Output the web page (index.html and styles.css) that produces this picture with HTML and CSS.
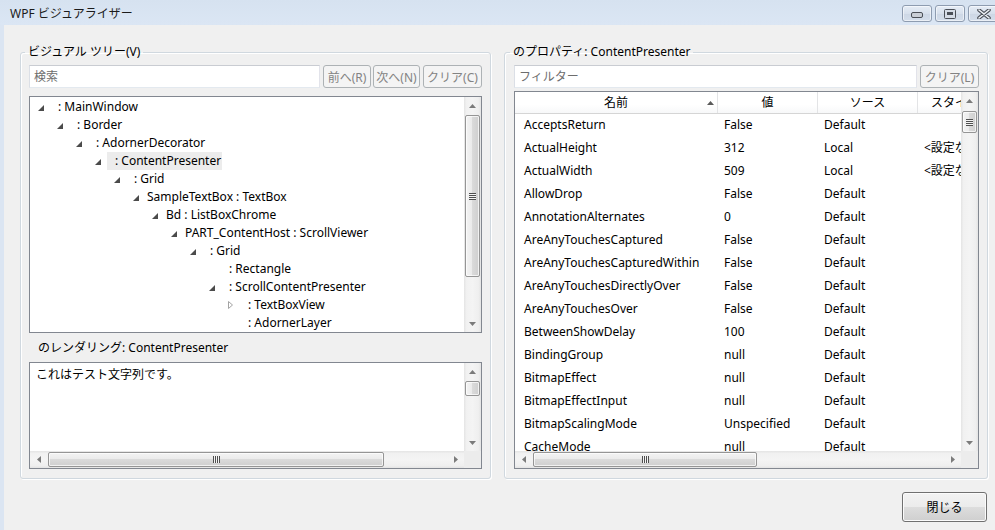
FILE: index.html
```html
<!DOCTYPE html>
<html lang="ja">
<head>
<meta charset="utf-8">
<title>WPF ビジュアライザー</title>
<link rel="stylesheet" href="styles.css">
</head>
<body>
<div class="window">
  <div class="titlebar">
    <div class="title">WPF ビジュアライザー</div>
    <div class="caption-buttons">
      <div class="cap-btn">
        <svg width="12" height="6" viewBox="0 0 12 6"><rect x="0.5" y="0.5" width="11" height="5" rx="1.5" fill="#c9ced6" stroke="#4a4f57"/></svg>
      </div>
      <div class="cap-btn">
        <svg width="12" height="10" viewBox="0 0 12 10"><rect x="0.5" y="0.5" width="11" height="9" rx="1" fill="#d5dce6" stroke="#4a4f57"/><rect x="3" y="3" width="6" height="3" fill="#4a4f57"/></svg>
      </div>
      <div class="cap-btn close">
        <svg width="14" height="10" viewBox="0 0 14 10"><path d="M2 1 L12 9 M12 1 L2 9" stroke="#4a4f57" stroke-width="3.6" stroke-linecap="round"/><path d="M2 1 L12 9 M12 1 L2 9" stroke="#eef2f7" stroke-width="1.6" stroke-linecap="round"/></svg>
      </div>
    </div>
  </div>
  <div class="frame">
    <div class="frame-left"></div>
    <div class="client">
      <div class="panes">
        <fieldset class="group group-left">
          <legend>ビジュアル ツリー(V)</legend>
          <div class="search-row">
            <div class="textbox"><span class="placeholder">検索</span></div>
            <div class="btn disabled b-prev">前へ(R)</div>
            <div class="btn disabled b-next">次へ(N)</div>
            <div class="btn disabled b-clear">クリア(C)</div>
          </div>
          <div class="tree-box">
            <div class="tree">
              <div class="node l0"><span class="exp"><svg class="tri" width="6" height="6" viewBox="0 0 6 6"><path d="M6 0 V6 H0 Z"/></svg></span><span class="label"><span class="gap"></span>: MainWindow</span></div>
              <div class="node l1"><span class="exp"><svg class="tri" width="6" height="6" viewBox="0 0 6 6"><path d="M6 0 V6 H0 Z"/></svg></span><span class="label"><span class="gap"></span>: Border</span></div>
              <div class="node l2"><span class="exp"><svg class="tri" width="6" height="6" viewBox="0 0 6 6"><path d="M6 0 V6 H0 Z"/></svg></span><span class="label"><span class="gap"></span>: AdornerDecorator</span></div>
              <div class="node l3"><span class="exp"><svg class="tri" width="6" height="6" viewBox="0 0 6 6"><path d="M6 0 V6 H0 Z"/></svg></span><span class="label selected"><span class="gap"></span>: ContentPresenter</span></div>
              <div class="node l4"><span class="exp"><svg class="tri" width="6" height="6" viewBox="0 0 6 6"><path d="M6 0 V6 H0 Z"/></svg></span><span class="label"><span class="gap"></span>: Grid</span></div>
              <div class="node l5"><span class="exp"><svg class="tri" width="6" height="6" viewBox="0 0 6 6"><path d="M6 0 V6 H0 Z"/></svg></span><span class="label">SampleTextBox : TextBox</span></div>
              <div class="node l6"><span class="exp"><svg class="tri" width="6" height="6" viewBox="0 0 6 6"><path d="M6 0 V6 H0 Z"/></svg></span><span class="label">Bd : ListBoxChrome</span></div>
              <div class="node l7"><span class="exp"><svg class="tri" width="6" height="6" viewBox="0 0 6 6"><path d="M6 0 V6 H0 Z"/></svg></span><span class="label">PART_ContentHost : ScrollViewer</span></div>
              <div class="node l8"><span class="exp"><svg class="tri" width="6" height="6" viewBox="0 0 6 6"><path d="M6 0 V6 H0 Z"/></svg></span><span class="label"><span class="gap"></span>: Grid</span></div>
              <div class="node l9"><span class="exp"></span><span class="label"><span class="gap"></span>: Rectangle</span></div>
              <div class="node l9"><span class="exp"><svg class="tri" width="6" height="6" viewBox="0 0 6 6"><path d="M6 0 V6 H0 Z"/></svg></span><span class="label"><span class="gap"></span>: ScrollContentPresenter</span></div>
              <div class="node l10"><span class="exp"><svg class="tri-open" width="5" height="8" viewBox="0 0 5 8"><path d="M0.5 0.5 L4.5 4 L0.5 7.5 Z"/></svg></span><span class="label"><span class="gap"></span>: TextBoxView</span></div>
              <div class="node l10"><span class="exp"></span><span class="label"><span class="gap"></span>: AdornerLayer</span></div>
            </div>
            <div class="vscroll">
              <div class="sb-btn"><svg class="arrow" width="7" height="4" viewBox="0 0 7 4"><path d="M0 4 L3.5 0 L7 4 Z"/></svg></div>
              <div class="sb-track-v"><div class="thumb-v tree-thumb"><span class="grip-v"></span></div></div>
              <div class="sb-btn"><svg class="arrow" width="7" height="4" viewBox="0 0 7 4"><path d="M0 0 L3.5 4 L7 0 Z"/></svg></div>
            </div>
          </div>
          <div class="render-label">のレンダリング: ContentPresenter</div>
          <div class="render-box">
            <div class="render-content">これはテスト文字列です。</div>
            <div class="vscroll">
              <div class="sb-btn"><svg class="arrow" width="7" height="4" viewBox="0 0 7 4"><path d="M0 4 L3.5 0 L7 4 Z"/></svg></div>
              <div class="sb-track-v"><div class="thumb-v render-vthumb"></div></div>
              <div class="sb-btn"><svg class="arrow" width="7" height="4" viewBox="0 0 7 4"><path d="M0 0 L3.5 4 L7 0 Z"/></svg></div>
            </div>
            <div class="hscroll">
              <div class="sb-btn"><svg class="arrow" width="4" height="7" viewBox="0 0 4 7"><path d="M4 0 L0 3.5 L4 7 Z"/></svg></div>
              <div class="sb-track-h"><div class="thumb-h render-hthumb"><span class="grip-h"></span></div></div>
              <div class="sb-btn"><svg class="arrow" width="4" height="7" viewBox="0 0 4 7"><path d="M0 0 L4 3.5 L0 7 Z"/></svg></div>
            </div>
            <div class="corner"></div>
          </div>
        </fieldset>

        <fieldset class="group group-right">
          <legend>のプロパティ: ContentPresenter</legend>
          <div class="search-row filter-row">
            <div class="textbox"><span class="placeholder">フィルター</span></div>
            <div class="btn disabled b-clear">クリア(L)</div>
          </div>
          <div class="grid-box">
            <div class="grid-view">
              <div class="grid-header">
                <div class="hcell c-name">名前<svg class="sort" width="7" height="4" viewBox="0 0 7 4"><path d="M0 4 L3.5 0 L7 4 Z"/></svg></div>
                <div class="hcell c-val">値</div>
                <div class="hcell c-src">ソース</div>
                <div class="hcell c-sty">スタイル</div>
              </div>
              <div class="grow"><span class="cell c-name">AcceptsReturn</span><span class="cell c-val">False</span><span class="cell c-src">Default</span><span class="cell c-sty"></span></div>
              <div class="grow"><span class="cell c-name">ActualHeight</span><span class="cell c-val">312</span><span class="cell c-src">Local</span><span class="cell c-sty">&lt;設定なし&gt;</span></div>
              <div class="grow"><span class="cell c-name">ActualWidth</span><span class="cell c-val">509</span><span class="cell c-src">Local</span><span class="cell c-sty">&lt;設定なし&gt;</span></div>
              <div class="grow"><span class="cell c-name">AllowDrop</span><span class="cell c-val">False</span><span class="cell c-src">Default</span><span class="cell c-sty"></span></div>
              <div class="grow"><span class="cell c-name">AnnotationAlternates</span><span class="cell c-val">0</span><span class="cell c-src">Default</span><span class="cell c-sty"></span></div>
              <div class="grow"><span class="cell c-name">AreAnyTouchesCaptured</span><span class="cell c-val">False</span><span class="cell c-src">Default</span><span class="cell c-sty"></span></div>
              <div class="grow"><span class="cell c-name">AreAnyTouchesCapturedWithin</span><span class="cell c-val">False</span><span class="cell c-src">Default</span><span class="cell c-sty"></span></div>
              <div class="grow"><span class="cell c-name">AreAnyTouchesDirectlyOver</span><span class="cell c-val">False</span><span class="cell c-src">Default</span><span class="cell c-sty"></span></div>
              <div class="grow"><span class="cell c-name">AreAnyTouchesOver</span><span class="cell c-val">False</span><span class="cell c-src">Default</span><span class="cell c-sty"></span></div>
              <div class="grow"><span class="cell c-name">BetweenShowDelay</span><span class="cell c-val">100</span><span class="cell c-src">Default</span><span class="cell c-sty"></span></div>
              <div class="grow"><span class="cell c-name">BindingGroup</span><span class="cell c-val">null</span><span class="cell c-src">Default</span><span class="cell c-sty"></span></div>
              <div class="grow"><span class="cell c-name">BitmapEffect</span><span class="cell c-val">null</span><span class="cell c-src">Default</span><span class="cell c-sty"></span></div>
              <div class="grow"><span class="cell c-name">BitmapEffectInput</span><span class="cell c-val">null</span><span class="cell c-src">Default</span><span class="cell c-sty"></span></div>
              <div class="grow"><span class="cell c-name">BitmapScalingMode</span><span class="cell c-val">Unspecified</span><span class="cell c-src">Default</span><span class="cell c-sty"></span></div>
              <div class="grow"><span class="cell c-name">CacheMode</span><span class="cell c-val">null</span><span class="cell c-src">Default</span><span class="cell c-sty"></span></div>
            </div>
            <div class="vscroll">
              <div class="sb-btn"><svg class="arrow" width="7" height="4" viewBox="0 0 7 4"><path d="M0 4 L3.5 0 L7 4 Z"/></svg></div>
              <div class="sb-track-v"><div class="thumb-v grid-vthumb"><span class="grip-v"></span></div></div>
              <div class="sb-btn"><svg class="arrow" width="7" height="4" viewBox="0 0 7 4"><path d="M0 0 L3.5 4 L7 0 Z"/></svg></div>
            </div>
            <div class="hscroll">
              <div class="sb-btn"><svg class="arrow" width="4" height="7" viewBox="0 0 4 7"><path d="M4 0 L0 3.5 L4 7 Z"/></svg></div>
              <div class="sb-track-h"><div class="thumb-h grid-hthumb"><span class="grip-h"></span></div></div>
              <div class="sb-btn"><svg class="arrow" width="4" height="7" viewBox="0 0 4 7"><path d="M0 0 L4 3.5 L0 7 Z"/></svg></div>
            </div>
            <div class="corner"></div>
          </div>
        </fieldset>
      </div>
      <div class="footer">
        <div class="btn close-btn">閉じる</div>
      </div>
    </div>
  </div>
</div>
</body>
</html>
```
FILE: styles.css
```css
html, body {
  margin: 0;
  padding: 0;
}
body {
  width: 995px;
  height: 530px;
  overflow: hidden;
  font-family: "Noto Sans", "Noto Sans CJK JP", sans-serif;
  font-size: 12px;
  color: #000;
  background: #dbe5f2;
}
.window {
  display: flex;
  flex-direction: column;
  width: 995px;
  height: 530px;
}
.titlebar {
  height: 25px;
  flex-shrink: 0;
  display: flex;
  align-items: flex-start;
  background: linear-gradient(#d6e2f0, #dbe6f4);
  padding-left: 10px;
}
.title {
  flex: 1;
  min-width: 0;
  line-height: 27px;
  color: #1b1b1b;
  white-space: nowrap;
}
.caption-buttons {
  display: flex;
  gap: 3px;
  padding-top: 5px;
  margin-right: -16px;
  flex-shrink: 0;
}
.cap-btn {
  width: 30px;
  height: 17px;
  box-sizing: border-box;
  border: 1px solid #8e9cb0;
  border-radius: 3px;
  background: linear-gradient(#e6edf6, #d7e0ec 50%, #cdd7e5 51%, #d4deeb);
  box-shadow: inset 0 0 0 1px rgba(255,255,255,0.55);
  display: flex;
  align-items: center;
  justify-content: center;
}
.cap-btn:first-child svg {
  margin-top: 3px;
}
.cap-btn.close {
  width: 43px;
  justify-content: flex-start;
  padding-left: 8px;
}
.frame {
  flex: 1;
  display: flex;
  min-height: 0;
}
.frame-left {
  width: 4px;
  flex-shrink: 0;
  background: #dbe5f2;
}
.client {
  flex: 1;
  background: #f0f0f0;
  padding: 19px 7px 0 16px;
  display: flex;
  flex-direction: column;
}
.panes {
  display: flex;
  gap: 13px;
}
.group {
  margin: 0;
  border: 1px solid #d0d8df;
  border-radius: 3px;
  box-shadow: inset 1px 1px 0 #fff, 1px 1px 0 #fff;
  padding: 5px 8px 9px 8px;
  min-width: 0;
  display: flex;
  flex-direction: column;
  box-sizing: border-box;
}
.group legend {
  padding: 0 3px;
  margin-left: -4px;
  line-height: 16px;
  height: 16px;
  white-space: nowrap;
}
.group-left {
  width: 471px;
}
.group-right {
  width: 484px;
  padding-left: 9px;
}
.search-row {
  display: flex;
  height: 23px;
  gap: 2px;
  flex-shrink: 0;
}
.textbox {
  flex: 1;
  min-width: 0;
  box-sizing: border-box;
  height: 23px;
  background: #fff;
  border: 1px solid;
  border-color: #c9ccd2 #e2e3ea #e3e9ef #dbdfe6;
  padding-left: 4px;
  line-height: 21px;
}
.placeholder {
  color: #6d6d6d;
}
.btn {
  box-sizing: border-box;
  height: 23px;
  border-radius: 3px;
  display: flex;
  align-items: center;
  justify-content: center;
  white-space: nowrap;
}
.btn.disabled {
  border: 1px solid #adb2b5;
  background: #f4f4f4;
  color: #838383;
}
.b-prev { width: 48px; margin-left: 1px; }
.b-next { width: 47px; }
.b-clear { width: 59px; margin-left: 1px; }

.tree-box {
  margin-top: 8px;
  height: 237px;
  box-sizing: border-box;
  border: 1px solid #828790;
  background: #fff;
  display: grid;
  grid-template-columns: 1fr 17px;
  flex-shrink: 0;
}
.tree {
  overflow: hidden;
  min-width: 0;
  padding-top: 1px;
}
.node {
  display: flex;
  align-items: center;
  height: 18px;
  line-height: 18px;
  white-space: nowrap;
  padding-left: 1px;
}
.l1 { padding-left: 20px; }
.l2 { padding-left: 39px; }
.l3 { padding-left: 58px; }
.l4 { padding-left: 77px; }
.l5 { padding-left: 96px; }
.l6 { padding-left: 115px; }
.l7 { padding-left: 134px; }
.l8 { padding-left: 153px; }
.l9 { padding-left: 172px; }
.l10 { padding-left: 191px; }
.exp {
  width: 19px;
  height: 18px;
  flex-shrink: 0;
  display: flex;
  align-items: center;
  justify-content: center;
}
.tri {
  fill: #4b4b4b;
  margin-top: 1px;
}
.tri-open {
  fill: #fff;
  stroke: #a3a3a3;
  stroke-width: 1;
}
.label {
  display: flex;
  align-items: center;
  height: 18px;
  padding: 0 1px 0 2px;
}
.gap {
  display: inline-block;
  width: 6px;
}
.label.selected {
  background: #ececec;
}

.vscroll {
  display: flex;
  flex-direction: column;
  background: linear-gradient(to right, #e4e4e4, #f1f1f1 15%, #f4f4f4 50%, #efefef 85%, #e4e4e4);
  min-height: 0;
}
.hscroll {
  display: flex;
  background: linear-gradient(#e4e4e4, #f1f1f1 15%, #f4f4f4 50%, #efefef 85%, #e4e4e4);
  min-width: 0;
}
.sb-btn {
  width: 17px;
  height: 17px;
  flex-shrink: 0;
  display: flex;
  align-items: center;
  justify-content: center;
}
.arrow {
  fill: #7b7b7b;
}
.sb-track-v {
  flex: 1;
  min-height: 0;
  padding: 0 1px;
}
.sb-track-h {
  flex: 1;
  min-width: 0;
  padding: 1px 0;
}
.thumb-v {
  box-sizing: border-box;
  width: 15px;
  border: 1px solid #959595;
  border-radius: 2px;
  background: linear-gradient(to right, #f3f3f3, #ebebeb 45%, #dadada 50%, #cfcfcf);
  box-shadow: inset 0 0 0 1px rgba(255,255,255,0.7);
  display: flex;
  align-items: center;
  justify-content: center;
}
.thumb-h {
  box-sizing: border-box;
  height: 15px;
  border: 1px solid #959595;
  border-radius: 2px;
  background: linear-gradient(#f3f3f3, #ebebeb 45%, #dadada 50%, #cfcfcf);
  box-shadow: inset 0 0 0 1px rgba(255,255,255,0.7);
  display: flex;
  align-items: center;
  justify-content: center;
}
.grip-v {
  width: 7px;
  height: 7px;
  background: repeating-linear-gradient(#4f4f4f 0 1px, #f4f4f4 1px 2px);
}
.grip-h {
  width: 7px;
  height: 7px;
  background: repeating-linear-gradient(to right, #4f4f4f 0 1px, #f4f4f4 1px 2px);
}
.tree-thumb {
  margin-top: 1px;
  height: 162px;
}
.render-vthumb {
  margin-top: 1px;
  height: 15px;
}
.grid-vthumb {
  margin-top: 2px;
  height: 22px;
}
.render-hthumb {
  margin-left: 1px;
  width: 336px;
}
.grid-hthumb {
  margin-left: 1px;
  width: 224px;
}
.corner {
  background: #ececec;
}

.render-label {
  height: 29px;
  line-height: 29px;
  padding-left: 9px;
  flex-shrink: 0;
  white-space: nowrap;
}
.render-box {
  height: 107px;
  box-sizing: border-box;
  border: 1px solid #828790;
  background: #fff;
  display: grid;
  grid-template-columns: 1fr 17px;
  grid-template-rows: 1fr 17px;
  flex-shrink: 0;
}
.render-content {
  padding: 4px 6px;
  line-height: 16px;
  white-space: nowrap;
}

.grid-box {
  margin-top: 3px;
  height: 378px;
  box-sizing: border-box;
  border: 1px solid #828790;
  background: #fff;
  display: grid;
  grid-template-columns: 1fr 17px;
  grid-template-rows: 1fr 17px;
  flex-shrink: 0;
}
.grid-view {
  overflow: hidden;
  min-width: 0;
  min-height: 0;
}
.grid-header {
  display: flex;
  height: 22px;
  box-sizing: border-box;
  border-bottom: 1px solid #d5d5d5;
  background: linear-gradient(#ffffff, #ffffff 60%, #f7f8f9);
  white-space: nowrap;
}
.hcell {
  box-sizing: border-box;
  flex-shrink: 0;
  border-right: 1px solid #e3e4e6;
  display: flex;
  align-items: center;
  justify-content: center;
  position: relative;
  line-height: 21px;
}
.hcell.c-sty {
  justify-content: flex-start;
  padding-left: 13px;
}
.sort {
  position: absolute;
  right: 3px;
  top: 9px;
  fill: #5a5a5a;
}
.c-name { width: 203px; }
.c-val { width: 100px; }
.c-src { width: 100px; }
.c-sty { width: 100px; }
.grow {
  display: flex;
  height: 23px;
  line-height: 22px;
  white-space: nowrap;
}
.cell {
  box-sizing: border-box;
  flex-shrink: 0;
  overflow: hidden;
  padding-left: 6px;
}
.cell.c-name {
  padding-left: 9px;
}

.footer {
  display: flex;
  justify-content: flex-end;
  margin-top: 13px;
}
.close-btn {
  width: 85px;
  height: 30px;
  margin-right: 1px;
  border: 1px solid #707070;
  background: linear-gradient(#f2f2f2, #ebebeb 50%, #dddddd 50%, #cfcfcf);
  box-shadow: inset 0 0 0 1px #fbfbfb;
}
```
